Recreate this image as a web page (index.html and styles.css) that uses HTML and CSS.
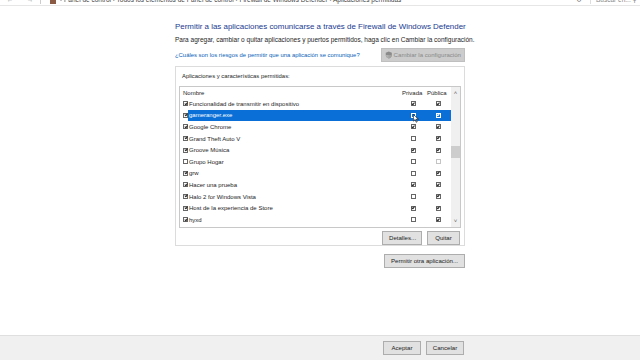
FILE: index.html
```html
<!DOCTYPE html>
<html lang="es">
<head>
  <meta charset="UTF-8" />
  <title>Aplicaciones permitidas</title>
  <link rel="stylesheet" href="styles.css">
</head>
<body>
  <div class="addr-bar">
    <span class="nav">&larr;</span>
    <span class="nav">&rarr;</span>
    <span class="sep"></span>
    <span class="folder"></span>
    <span class="crumbs">&rsaquo; Panel de control &rsaquo; Todos los elementos de Panel de control &rsaquo; Firewall de Windows Defender &rsaquo; Aplicaciones permitidas</span>
    <span class="refresh">&#8635;</span>
    <span class="search">Buscar en... &#9906;</span>
  </div>

  <div class="page">
    <div class="content">
      <h1>Permitir a las aplicaciones comunicarse a través de Firewall de Windows Defender</h1>
      <p class="hint">Para agregar, cambiar o quitar aplicaciones y puertos permitidos, haga clic en Cambiar la configuración.</p>

      <div class="link-row">
        <a class="risk-link">¿Cuáles son los riesgos de permitir que una aplicación se comunique?</a>
        <button class="btn disabled">
          <svg class="shield" viewBox="0 0 10 10" width="8" height="8">
            <path d="M5 0.5 L9 2 V5 C9 7.5 7 9 5 9.5 C3 9 1 7.5 1 5 V2 Z" fill="#8a8a8a"/>
            <path d="M5 0.5 V9.5 C3 9 1 7.5 1 5 V5 H5 Z" fill="#b0b0b0"/>
            <path d="M5 5 H9 C9 7.5 7 9 5 9.5 Z" fill="#a2a2a2"/>
          </svg>Cambiar la configuración</button>
      </div>

      <div class="group">
        <div class="group-title">Aplicaciones y características permitidas:</div>
        <div class="list">
          <div class="list-body">
            <div class="row head"><span class="name">Nombre</span><span class="col">Privada</span><span class="col">Pública</span></div>
            <div class="row"><span class="name"><i class="cb on"></i>Funcionalidad de transmitir en dispositivo</span><span class="col"><i class="cb on"></i></span><span class="col"><i class="cb on"></i></span></div>
            <div class="row sel"><span class="name"><i class="cb on"></i><em>gameranger.exe</em></span><span class="col"><i class="cb"></i><svg class="cursor" viewBox="0 0 8 12" width="6" height="9"><path d="M0.5 0.5 V9.5 L2.8 7.4 L4.3 11 L5.6 10.4 L4.1 6.9 L7.2 6.9 Z" fill="#fff" stroke="#000" stroke-width="0.8"/></svg></span><span class="col"><i class="cb on"></i></span></div>
            <div class="row"><span class="name"><i class="cb on"></i>Google Chrome</span><span class="col"><i class="cb on"></i></span><span class="col"><i class="cb on"></i></span></div>
            <div class="row"><span class="name"><i class="cb on"></i>Grand Theft Auto V</span><span class="col"><i class="cb"></i></span><span class="col"><i class="cb on"></i></span></div>
            <div class="row"><span class="name"><i class="cb on"></i>Groove Música</span><span class="col"><i class="cb on"></i></span><span class="col"><i class="cb on"></i></span></div>
            <div class="row"><span class="name"><i class="cb"></i>Grupo Hogar</span><span class="col"><i class="cb"></i></span><span class="col"><i class="cb faint"></i></span></div>
            <div class="row"><span class="name"><i class="cb on"></i>grw</span><span class="col"><i class="cb"></i></span><span class="col"><i class="cb on"></i></span></div>
            <div class="row"><span class="name"><i class="cb on"></i>Hacer una prueba</span><span class="col"><i class="cb on"></i></span><span class="col"><i class="cb on"></i></span></div>
            <div class="row"><span class="name"><i class="cb on"></i>Halo 2 for Windows Vista</span><span class="col"><i class="cb"></i></span><span class="col"><i class="cb on"></i></span></div>
            <div class="row"><span class="name"><i class="cb on"></i>Host de la experiencia de Store</span><span class="col"><i class="cb on"></i></span><span class="col"><i class="cb on"></i></span></div>
            <div class="row"><span class="name"><i class="cb on"></i>hyxd</span><span class="col"><i class="cb"></i></span><span class="col"><i class="cb on"></i></span></div>
          </div>
          <div class="scrollbar">
            <span class="arrow">&#708;</span>
            <div class="track"><div class="thumb"></div></div>
            <span class="arrow">&#709;</span>
          </div>
        </div>
        <div class="list-actions">
          <button class="btn">Detalles...</button>
          <button class="btn">Quitar</button>
        </div>
      </div>

      <div class="other-row">
        <button class="btn wide">Permitir otra aplicación...</button>
      </div>
    </div>
  </div>

  <div class="footer">
    <button class="btn">Aceptar</button>
    <button class="btn">Cancelar</button>
  </div>
</body>
</html>
```
FILE: styles.css
```css
* {
  box-sizing: border-box;
}
body {
  margin: 0;
  width: 640px;
  height: 360px;
  overflow: hidden;
  font-family: "Liberation Sans", Arial, sans-serif;
  background: #fff;
  color: #1e1e1e;
  display: flex;
  flex-direction: column;
}

/* address bar, mostly scrolled off the top */
.addr-bar {
  height: 6px;
  display: flex;
  align-items: flex-end;
  font-size: 6.5px;
  line-height: 8px;
  color: #444;
  border-bottom: 1px solid #e6e6e6;
  overflow: hidden;
  white-space: nowrap;
  padding-bottom: 1px;
}
.nav {
  width: 20px;
  text-align: center;
  color: #999;
}
.sep {
  width: 1px;
  height: 6px;
  background: #ccc;
  margin: 0 5px 0 0;
}
.folder {
  width: 6px;
  height: 5px;
  background: #8a5a44;
  margin: 0 4px;
}
.crumbs {
  flex: 1;
}
.refresh {
  width: 14px;
  color: #666;
}
.search {
  width: 50px;
  color: #888;
  border-left: 1px solid #ddd;
  padding-left: 5px;
}

.page {
  flex: 1;
  display: flex;
  padding-left: 175px;
}
.content {
  width: 290px;
  padding-top: 14px;
}
h1 {
  margin: 0;
  font-size: 7.95px;
  font-weight: normal;
  color: #1a3a8f;
  line-height: 13px;
  white-space: nowrap;
}
.hint {
  margin: 2px 0 0;
  font-size: 6.5px;
  line-height: 10px;
  white-space: nowrap;
}
.link-row {
  display: flex;
  justify-content: space-between;
  align-items: center;
  margin-top: 3px;
}
.risk-link {
  font-size: 5.9px;
  color: #0a5fb8;
  white-space: nowrap;
}

.btn {
  font-family: inherit;
  font-size: 6.1px;
  color: #222;
  background: #e1e1e1;
  border: 1px solid #adadad;
  height: 14px;
  padding: 0 6px;
  line-height: 12px;
  white-space: nowrap;
}
.btn.disabled {
  width: 84px;
  background: #cccccc;
  border-color: #bfbfbf;
  color: #8a8a8a;
  display: flex;
  align-items: center;
  padding: 0 3px;
}
.shield {
  margin-right: 1px;
}

.group {
  margin-top: 4px;
  border: 1px solid #dcdcdc;
  height: 180px;
  padding: 4px 3px 0 3px;
}
.group-title {
  font-size: 5.9px;
  line-height: 10px;
  padding-left: 3px;
}
.list {
  margin-top: 5px;
  border: 1px solid #c8c8c8;
  height: 142px;
  display: flex;
}
.list-body {
  flex: 1;
}
.row {
  display: flex;
  height: 11.6px;
  align-items: center;
  font-size: 6px;
  white-space: nowrap;
}
.row.head {
  height: 11px;
}
.name {
  flex: 1;
  display: flex;
  align-items: center;
  padding-left: 3px;
}
.col {
  width: 25px;
  display: flex;
  justify-content: center;
  position: relative;
}
.row.head .col {
  justify-content: flex-start;
  padding-left: 1px;
}
.row.sel {
  background: linear-gradient(to right, transparent 8px, #0a6fd6 8px);
  color: #fff;
}
.row.sel em {
  font-style: normal;
}
.cb {
  width: 5px;
  height: 5px;
  border: 1px solid #666;
  background: #fff;
  margin-right: 1px;
  position: relative;
  display: inline-block;
}
.cb.on::after {
  content: "";
  position: absolute;
  left: 0.6px;
  top: -0.6px;
  width: 1.2px;
  height: 2.4px;
  border-right: 0.8px solid #222;
  border-bottom: 0.8px solid #222;
  transform: rotate(40deg);
}
.cb.faint {
  border-color: #c4c4c4;
}
.row.sel .cb {
  border-color: #fff;
  background: transparent;
}
.row.sel .name .cb {
  border-color: #666;
  background: #fff;
}
.row.sel .cb.on::after {
  border-color: #fff;
}
.row.sel .name .cb.on::after {
  border-color: #222;
}
.cursor {
  position: absolute;
  left: 12px;
  top: 1px;
}

.scrollbar {
  width: 9px;
  background: #f0f0f0;
  display: flex;
  flex-direction: column;
  align-items: center;
  font-size: 6px;
  color: #606060;
}
.arrow {
  height: 12px;
  line-height: 12px;
}
.track {
  flex: 1;
  width: 100%;
  padding-top: 47px;
}
.thumb {
  height: 12px;
  background: #cdcdcd;
}

.list-actions {
  display: flex;
  justify-content: flex-end;
  gap: 5px;
  margin-top: 3px;
  padding-right: 1px;
}
.list-actions .btn:first-child {
  width: 40px;
}
.list-actions .btn:last-child {
  width: 33px;
}
.other-row {
  display: flex;
  justify-content: flex-end;
  margin-top: 8px;
}
.btn.wide {
  width: 81px;
}

.footer {
  height: 25px;
  background: #f0f0f0;
  border-top: 1px solid #dfdfdf;
  display: flex;
  align-items: center;
  padding-left: 383px;
  gap: 5px;
}
.footer .btn {
  width: 38px;
  padding: 0;
}
```
